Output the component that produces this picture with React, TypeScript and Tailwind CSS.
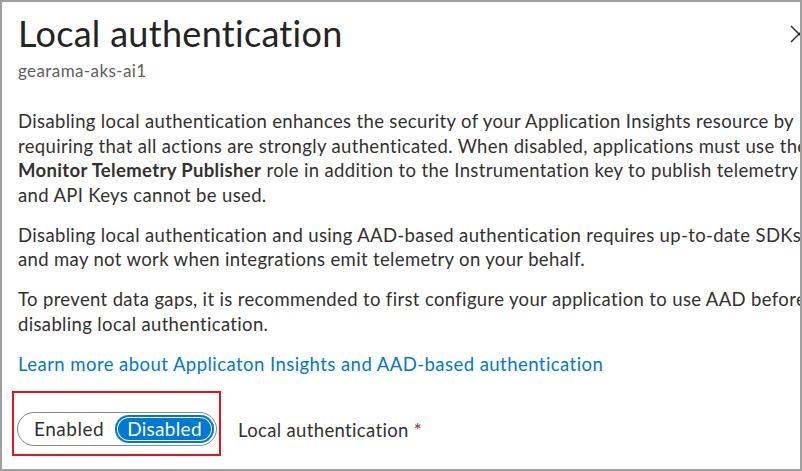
const font = { fontFamily: "Lato, 'Liberation Sans', sans-serif" };

export default function App() {
  return (
    <div
      className="w-[802px] h-[471px] border-2 border-[#a0a0a0] bg-white overflow-hidden text-[#323130]"
      style={font}
    >
      <div className="pl-4 pt-[9px] flex flex-col">
        {/* header */}
        <div className="flex items-start justify-between">
          <h1 className="text-[36px] leading-[44px] tracking-[0.3px] font-normal text-[#252423]">
            Local authentication
          </h1>
          <svg
            className="mt-[14px] -mr-[8px] shrink-0"
            width="18"
            height="18"
            viewBox="0 0 18 18"
            fill="none"
            stroke="#252423"
            strokeWidth="1.4"
          >
            <path d="M1 1 L17 17 M17 1 L1 17" />
          </svg>
        </div>
        <p className="mt-[5px] text-[17px] leading-[22px] tracking-[0.4px] text-[#605e5c]">
          gearama-aks-ai1
        </p>

        <div className="mt-[27px] text-[18.5px] leading-[24.5px] tracking-[0.35px] whitespace-nowrap flex flex-col gap-[15.5px]">
          <p>
            Disabling local authentication enhances the security of your Application Insights resource by
            <br />
            requiring that all actions are strongly authenticated. When disabled, applications must use the{" "}
            <b>Azure</b>
            <br />
            <b>Monitor Telemetry Publisher</b> role in addition to the Instrumentation key to publish telemetry
            <br />
            and API Keys cannot be used.
          </p>
          <p>
            Disabling local authentication and using AAD-based authentication requires up-to-date SDKs
            <br />
            and may not work when integrations emit telemetry on your behalf.
          </p>
          <p>
            To prevent data gaps, it is recommended to first configure your application to use AAD before
            <br />
            disabling local authentication.
          </p>
          <a className="text-[#0078d4] tracking-[0.45px] cursor-pointer">
            Learn more about Applicaton Insights and AAD-based authentication
          </a>
        </div>

        <div className="mt-[15px] flex items-start">
          <div className="-ml-[6px] border-2 border-[#e8141b] pt-[19px] pb-[8px] pl-[3px] pr-[2px]">
            <div className="w-[200px] h-[34px] rounded-full border border-[#8a8886] flex items-center pl-[16px] pr-[2px] justify-between">
              <span className="text-[19px] tracking-[0.5px] text-[#323130]">Enabled</span>
              <span className="w-[99px] h-[28px] rounded-full bg-[#0078d4] shadow-[inset_0_0_0_2px_#0078d4,inset_0_0_0_3px_#ffffff] flex items-center justify-center text-[19px] tracking-[0.3px] text-white">
                Disabled
              </span>
            </div>
          </div>
          <div className="ml-[17px] mt-[27px] text-[18.5px] leading-[24.5px] tracking-[0.35px]">
            Local authentication <span className="text-[#a4262c]">*</span>
          </div>
        </div>
      </div>
    </div>
  );
}
